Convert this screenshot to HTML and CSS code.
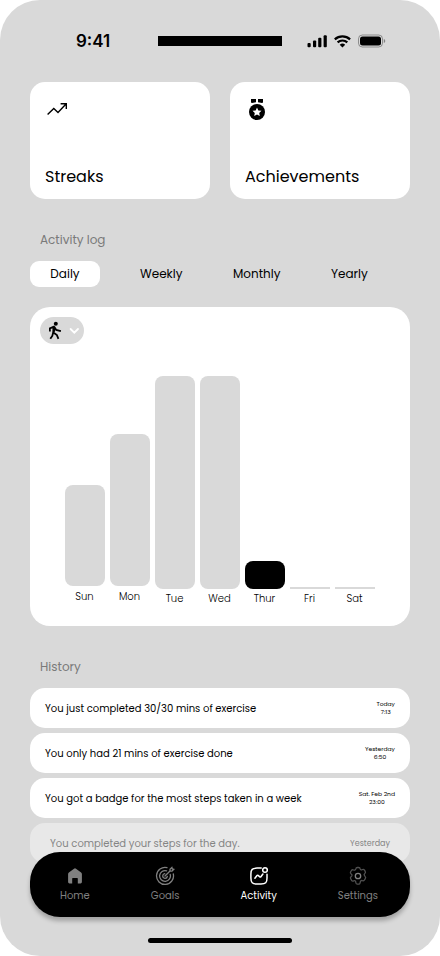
FILE: index.html
```html
<!DOCTYPE html>
<html lang="en">
<head>
<meta charset="utf-8">
<title>Activity</title>
<link rel="stylesheet" href="styles.css">
</head>
<body>
<div class="phone">
  <header class="status">
    <span class="clock">9:41</span>
    <span class="island"></span>
    <svg class="signals" width="80" height="16" viewBox="0 0 80 16">
      <rect x=".5" y="9" width="3.2" height="4.2" rx="1"/>
      <rect x="6" y="6.5" width="3.2" height="6.7" rx="1"/>
      <rect x="11.2" y="3.8" width="3.2" height="9.4" rx="1"/>
      <rect x="16.6" y="1.2" width="3.2" height="12" rx="1"/>
      <path d="M27.8 5.4a11.2 11.2 0 0 1 15.3 0M30.6 8.4a7.2 7.2 0 0 1 9.7 0" fill="none" stroke="#000" stroke-width="2.2"/>
      <path d="M32.7 10.8a4 4 0 0 1 5.5 0l-2.75 2.8z"/>
      <rect x="51.5" y="1" width="24" height="12" rx="3.8" fill="none" stroke="#000" stroke-opacity=".35"/>
      <rect x="53" y="2.5" width="21" height="9" rx="2.5"/>
      <path d="M76.8 5v4c.9-.3 1.4-1.1 1.4-2s-.5-1.7-1.4-2z" fill-opacity=".4"/>
    </svg>
  </header>

  <section class="tiles">
    <div class="tile">
      <svg width="24" height="24" viewBox="0 0 24 24" fill="none" stroke="#000" stroke-width="1.4"><path d="M2.6 17.6l6.2-6.1 4.2 3.9 8-8.3M15.6 6.8h5.7v5.1"/></svg>
      <h2>Streaks</h2>
    </div>
    <div class="tile">
      <svg width="24" height="24" viewBox="0 0 24 24"><path d="M6 2h5v3.3l-4 .6L6 5.500zM13 2h5v3.500l-1 .4-4-.6z"/><circle cx="12" cy="15" r="8"/><path fill="#fff" d="M12 10.500l1.350 2.900 3.150.35-2.300 2.200.6 3.150L12 17.550 9.200 19.100l.6-3.150-2.300-2.200 3.150-.35z"/></svg>
      <h2>Achievements</h2>
    </div>
  </section>

  <h3 class="heading log">Activity log</h3>
  <nav class="tabs">
    <a class="tab on">Daily</a><a class="tab weekly">Weekly</a><a class="tab monthly">Monthly</a><a class="tab">Yearly</a>
  </nav>

  <section class="chart">
    <div class="picker">
      <svg width="44" height="27" viewBox="0 0 44 27">
        <circle cx="15.800" cy="6.700" r="2"/>
        <path d="M9.900 14.600v-3.200l4-1.700 2.300 3.200 4.700 1.300M13.600 10l-.2 5.500 3.500 2.600 1.500 3.700M13.200 15.500l-.9 3.400-2 2.900" fill="none" stroke="#000" stroke-width="1.800"/>
        <path d="M12.800 9.500l2.600.2-.5 5-2.200.6z"/>
        <path d="M30.600 12l3.700 3.700L38 12" fill="none" stroke="#fff" stroke-width="1.800" stroke-linecap="round"/>
      </svg>
    </div>
    <div class="bars">
      <div class="day up"><i style="height:101px"></i><span>Sun</span></div>
      <div class="day up"><i style="height:152px"></i><span>Mon</span></div>
      <div class="day"><i style="height:213px"></i><span>Tue</span></div>
      <div class="day"><i style="height:213px"></i><span>Wed</span></div>
      <div class="day today"><i style="height:28px"></i><span>Thur</span></div>
      <div class="day empty"><i style="height:2px"></i><span>Fri</span></div>
      <div class="day empty"><i style="height:2px"></i><span>Sat</span></div>
    </div>
  </section>

  <h3 class="heading">History</h3>
  <section class="history">
    <div class="entry"><p>You just completed 30/30 mins of exercise</p><time>Today<br>7:13</time></div>
    <div class="entry"><p>You only had 21 mins of exercise done</p><time>Yesterday<br>6:50</time></div>
    <div class="entry"><p>You got a badge for the most steps taken in a week</p><time>Sat. Feb 2nd<br>23:00</time></div>
    <div class="entry faded"><p>You completed your steps for the day.</p><time>Yesterday</time></div>
  </section>

  <nav class="dock">
    <a><svg width="20" height="20" viewBox="0 0 20 20"><path fill="#808080" d="M3.100 8.100q0-1 .8-1.600L9 2.700q1-.7 2 0l5.100 3.800q.8.6.8 1.600v8q0 1.400-1.400 1.400h-2.700v-5q0-.6-.6-.6H7.800q-.6 0-.6.6v5H4.500q-1.400 0-1.400-1.400z"/></svg><span>Home</span></a>
    <a><svg width="20" height="20" viewBox="0 0 20 20" fill="none" stroke="#808080" stroke-width="1.300" stroke-linecap="round"><path d="M12 1.700A8.500 8.500 0 1 0 18.300 8M11.600 4.800A5.400 5.400 0 1 0 15.200 8.400M9.700 7.700A2.300 2.300 0 1 0 12.300 10.300M10 10l5-5M15 5V3.300l1.900-1.900.4 1.600 1.500.3L17 5.100h-2"/></svg><span>Goals</span></a>
    <a class="active"><svg width="20" height="20" viewBox="0 0 20 20" fill="none" stroke="#fff" stroke-width="1.500" stroke-linecap="round" stroke-linejoin="round"><path d="M12.200 2.100H8C3.300 2.100 1.900 3.500 1.900 8v4c0 4.600 1.500 6 6.100 6h4c4.600 0 6-1.400 6-6V8.200M5.900 12.200L8 9.500q.5-.6 1.100-.1l1.700 1.400q.6.5 1.100-.1l2-2.700"/><circle cx="16" cy="4" r="2.300"/></svg><span>Activity</span></a>
    <a><svg width="20" height="20" viewBox="0 0 20 20" fill="none" stroke="#808080" stroke-width="1.300"><circle cx="10" cy="10" r="2.700"/><path stroke="#505050" d="M7.800 2.900Q8 1.500 9.400 1.500h1.200q1.400 0 1.600 1.400.3 1.300 1.600.9l.7-.3q1.400-.5 2 .7l.7 1.200q.7 1.200-.4 2.100-1.200 1-.3 2.200l.6.7q1 1.100.2 2.200l-1 1.500q-.7 1-1.900.6-1.500-.6-2 .8l-.3 1.300q-.3 1.400-1.500 1.400H9.400Q8.100 18.200 7.900 17l-.2-1.300q-.4-1.400-1.900-.9-1.500.7-2.200-.4l-.9-1.600q-.7-1.100.3-2l.7-.8q.8-1-.5-1.900-1.300-1-.6-2.200l.8-1.400q.7-1.100 2.100-.5 1.900.6 2.300-1.100z"/></svg><span>Settings</span></a>
  </nav>
  <div class="indicator"></div>
</div>
</body>
</html>
```
FILE: styles.css
```css
* { box-sizing: border-box; margin: 0; padding: 0; }
body {
  background: #fff;
  font-family: Poppins, Inter, sans-serif;
  color: #000;
}
svg { display: block; flex: none; }
h2, h3 { font-weight: 400; }

.phone {
  display: flex;
  flex-direction: column;
  width: 440px;
  height: 956px;
  padding: 0 30px;
  overflow: hidden;
  border-radius: 40px;
  background: #d9d9d9;
}

.status { display: flex; align-items: center; height: 82px; padding-left: 46px; }
.clock { width: 82px; font: 600 17px/20px Inter, sans-serif; }
.island { width: 124px; height: 10px; background: #000; }
.signals { margin: 2px 0 0 25px; }

.tiles { display: flex; gap: 20px; }
.tile {
  display: flex;
  flex-direction: column;
  justify-content: space-between;
  width: 180px;
  height: 117px;
  padding: 15px 15px 10px;
  border-radius: 15px;
  background: #fff;
}
.tile h2 { font-size: 16px; line-height: 24px; }

.heading {
  height: 18px;
  padding-left: 10px;
  color: #7a7a7a;
  font-size: 12px;
  line-height: 18px;
}
.log { margin-top: 32px; }

.tabs { display: flex; margin-top: 12px; }
.tab { height: 26px; font-size: 12px; line-height: 26px; }
.on { width: 70px; border-radius: 9px; background: #fff; text-align: center; }
.weekly { width: 93px; margin-left: 40px; }
.monthly { width: 98px; }

.chart {
  display: flex;
  flex-direction: column;
  justify-content: space-between;
  height: 319px;
  margin: 20px 0 32px;
  padding: 10px 10px 19px;
  border-radius: 20px;
  background: #fff;
}
.picker { width: 44px; height: 27px; border-radius: 14px; background: #d9d9d9; }
.bars { display: flex; align-items: flex-end; gap: 5px; padding-left: 25px; }
.day { display: flex; flex-direction: column; align-items: center; width: 40px; }
.day i { width: 100%; border-radius: 8px; background: #d9d9d9; }
.day span { height: 18px; padding: 2px 1px 0 0; font-size: 10px; font-weight: 300; line-height: 16px; }
.up { padding-bottom: 2px; }
.day.up span { height: 19px; padding-top: 3px; }
.today i { background: #000; }
.empty i { border-radius: 0; }

.history { display: flex; flex-direction: column; gap: 5px; margin-top: 12px; }
.entry {
  display: flex;
  align-items: center;
  justify-content: space-between;
  height: 40px;
  padding: 0 15px;
  border-radius: 15px;
  background: #fff;
}
.entry p { font-size: 10px; line-height: 15px; }
.entry time { font-size: 6px; line-height: 8px; text-align: center; }
.faded { padding: 0 20px; background: #e8e8e8; color: #858585; }
.entry.faded time { padding-top: 1px; font-size: 8px; line-height: 12px; }

.dock {
  position: relative;
  display: flex;
  flex: none;
  justify-content: space-between;
  height: 65px;
  margin-top: -11px;
  padding: 14px 32px 0 30px;
  border-radius: 30px;
  background: #000;
  box-shadow: 0 4px 4px rgba(0, 0, 0, .25);
}
.dock a { display: flex; flex-direction: column; align-items: center; color: #808080; font-size: 10px; line-height: 15px; }
.dock span { margin-top: 2px; }
.dock .active { color: #fff; }

.indicator { flex: none; align-self: center; width: 144px; height: 5px; margin-top: 21px; border-radius: 3px; background: #000; }
```
